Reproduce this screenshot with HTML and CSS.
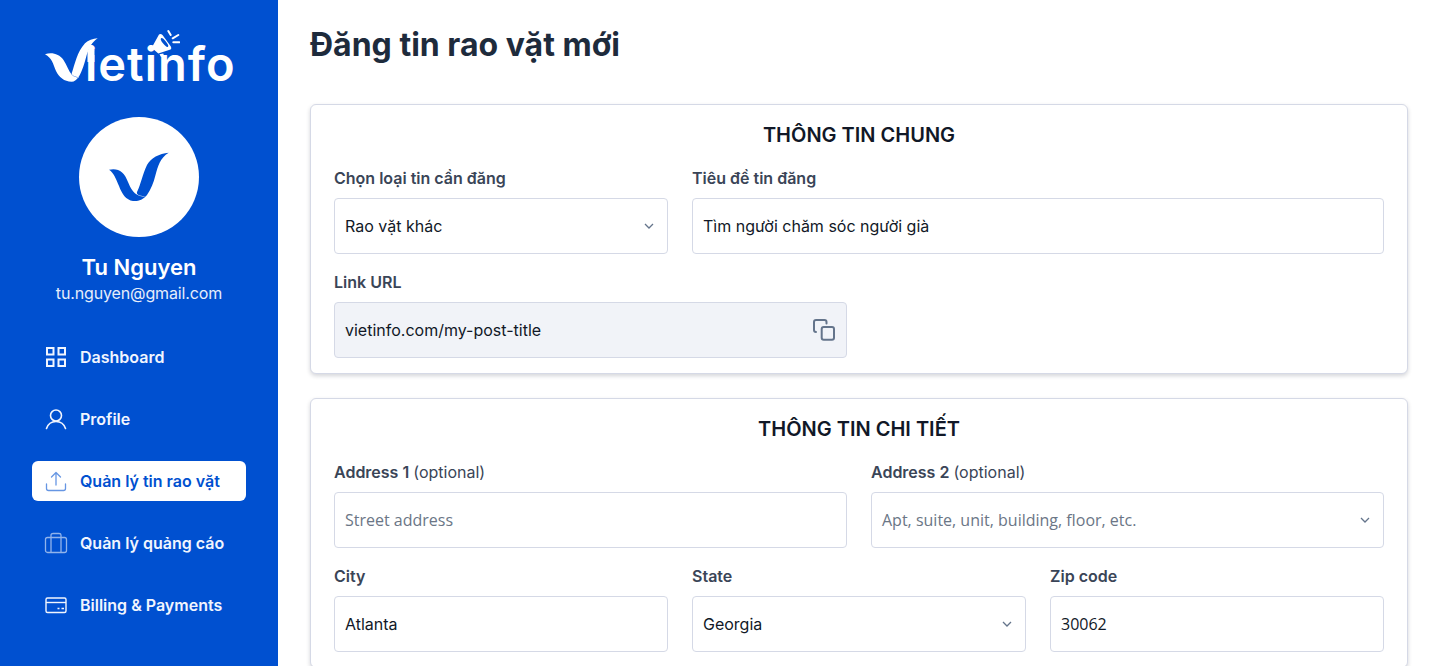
FILE: index.html
```html
<!DOCTYPE html>
<html lang="vi">
<head>
<meta charset="utf-8">
<title>Đăng tin rao vặt mới</title>
<link rel="stylesheet" href="styles.css">
</head>
<body>
<div class="app">
  <aside class="sidebar">
    <div class="logo">
      <span class="logo-text">ietinfo</span>
      <svg class="logo-v" viewBox="0 0 56 48" width="56" height="48" aria-hidden="true"><path fill="#fff" d="M1 18.300C8 16 15 18 19.500 24C23 29 24.500 35 28 39C30 41 33 41.700 35.300 41.700C31 40.500 28 40 27.700 37.300C31 28 33 16 41 7.300C44 4.500 49 2.500 53.700 2.300C48 6 45 12 42.700 19C41 25 40 29 38 34C36 39 33 45.700 27.700 45.700C20 45.700 15 41 12 35C9 28 8 22 1 18.300Z"/><rect fill="#fff" x="43.500" y="14" width="7" height="12"/></svg>
      <svg class="logo-horn" viewBox="0 0 30 30" width="30" height="30" aria-hidden="true"><path fill="#fff" d="M9 6.500C10 5.500 11.500 6 12.500 7L20.500 18C21.500 19.500 21.500 21 20.500 21.500L8.300 25.500L1.700 19.700ZM9.500 26.300L13.300 25.500L14 28L11 29Z"/><ellipse fill="#0050d0" cx="14.500" cy="14.500" rx="5.500" ry="1.700" transform="rotate(51 14.500 14.500)"/><path fill="none" stroke="#fff" stroke-width="2" stroke-linecap="round" d="M18.300 3L20.700 7M22.700 10.300L28.300 7M23.300 14.300H29.300"/></svg>
    </div>
    <div class="avatar">
      <svg viewBox="0 0 60 50" width="60" height="50" aria-hidden="true"><path fill="#0050d0" d="M0 17.700C9 15.500 15.500 20 19 30C21.500 36 25 44 34 44.500L37 44C32 44.500 27 43 28 40C32 32 33.500 22 38 13C42 6 50 1.500 59.700 0.700C51 6 49 14 46.500 23C44.500 31 42 37 38 43C34 48 29 49.500 24 49C17 48 13 42 10 34C7 27 5 21 0 17.700Z"/></svg>
    </div>
    <div class="user-name">Tu Nguyen</div>
    <div class="user-mail">tu.nguyen@gmail.com</div>
    <nav class="nav">
      <a class="nav-item">
        <svg class="ico" viewBox="0 0 24 24" fill="none" stroke="currentColor" stroke-width="2"><rect x="3" y="3" width="6.500" height="6.500"/><rect x="14.500" y="3" width="6.500" height="6.500"/><rect x="3" y="14.500" width="6.500" height="6.500"/><rect x="14.500" y="14.500" width="6.500" height="6.500"/></svg>
        <span>Dashboard</span>
      </a>
      <a class="nav-item">
        <svg class="ico" viewBox="0 0 24 24" fill="none" stroke="currentColor" stroke-width="1.600" stroke-linecap="round"><circle cx="12" cy="8.500" r="5.500"/><path d="M2.500 21.500C4 17 7.500 14.500 12 14.500C16.500 14.500 20 17 21.500 21.500"/></svg>
        <span>Profile</span>
      </a>
      <a class="nav-item nav-active">
        <svg class="ico" viewBox="0 0 24 24" fill="none" stroke="currentColor" stroke-width="1.300" stroke-linecap="round" stroke-linejoin="round"><path class="soft" d="M2.500 15V19.500C2.500 20.800 3.200 21.500 4.500 21.500H19.500C20.800 21.500 21.500 20.800 21.500 19.500V15"/><path class="soft" d="M12 16V3.500M7.500 8L12 3.500L16.500 8"/></svg>
        <span>Quản lý tin rao vặt</span>
      </a>
      <a class="nav-item">
        <svg class="ico" viewBox="0 0 24 24" fill="none" stroke="currentColor" stroke-width="1.300" stroke-linejoin="round"><g class="soft"><rect x="1.500" y="6.500" width="21" height="15" rx="2"/><path d="M7 21.500V4C7 3 8 2.500 9 2.500H15C16 2.500 17 3 17 4V21.500"/></g></svg>
        <span>Quản lý quảng cáo</span>
      </a>
      <a class="nav-item">
        <svg class="ico" viewBox="0 0 24 24" fill="none" stroke="currentColor" stroke-width="1.400"><rect x="2" y="5" width="20" height="14.500" rx="1.500"/><path d="M2 9.500H22"/><path stroke-width="1.600" d="M13.500 15.500H15.500M17.500 15.500H20"/></svg>
        <span>Billing &amp; Payments</span>
      </a>
    </nav>
  </aside>
  <main class="main">
    <h1 class="page-title">Đăng tin rao vặt mới</h1>
    <section class="card">
      <h2 class="card-title">THÔNG TIN CHUNG</h2>
      <div class="row row-3">
        <div class="field">
          <label class="label">Chọn loại tin cần đăng</label>
          <div class="control"><span>Rao vặt khác</span><svg class="chev" viewBox="0 0 12 12"><path d="M2 4L6 8L10 4"/></svg></div>
        </div>
        <div class="field span-2">
          <label class="label">Tiêu đề tin đăng</label>
          <div class="control"><span>Tìm người chăm sóc người già</span></div>
        </div>
      </div>
      <div class="row row-2">
        <div class="field">
          <label class="label">Link URL</label>
          <div class="control control-off"><span>vietinfo.com/my-post-title</span>
            <svg class="copy" viewBox="0 0 24 24" fill="none" stroke="#64748b" stroke-width="2" stroke-linejoin="round"><rect x="10.700" y="9" width="12.300" height="12.700" rx="2"/><path stroke-linecap="round" d="M5 14C3.800 14 3 13 3 12V4C3 2.900 3.900 2 5 2H13.500C14.600 2 15.500 2.900 15.500 4V5.500"/></svg>
          </div>
        </div>
      </div>
    </section>
    <section class="card">
      <h2 class="card-title">THÔNG TIN CHI TIẾT</h2>
      <div class="row row-2">
        <div class="field">
          <label class="label">Address 1 <span class="opt">(optional)</span></label>
          <div class="control"><span class="ph">Street address</span></div>
        </div>
        <div class="field">
          <label class="label">Address 2 <span class="opt">(optional)</span></label>
          <div class="control"><span class="ph">Apt, suite, unit, building, floor, etc.</span><svg class="chev" viewBox="0 0 12 12"><path d="M2 4L6 8L10 4"/></svg></div>
        </div>
      </div>
      <div class="row row-3">
        <div class="field">
          <label class="label">City</label>
          <div class="control"><span>Atlanta</span></div>
        </div>
        <div class="field">
          <label class="label">State</label>
          <div class="control"><span>Georgia</span><svg class="chev" viewBox="0 0 12 12"><path d="M2 4L6 8L10 4"/></svg></div>
        </div>
        <div class="field">
          <label class="label">Zip code</label>
          <div class="control"><span class="num">30062</span></div>
        </div>
      </div>
    </section>
  </main>
</div>
</body>
</html>
```
FILE: styles.css
```css
* { box-sizing: border-box; }
html, body { margin: 0; height: 100%; overflow: hidden; }
body { font-family: Inter, "Liberation Sans", sans-serif; color: #111827; background: #fff; }

.app { display: flex; height: 666px; overflow: hidden; }

.sidebar {
  width: 278px;
  flex: none;
  background: #0050d0;
  color: #fff;
  display: flex;
  flex-direction: column;
  align-items: center;
}

.logo { position: relative; width: 190px; height: 58px; margin-top: 28px; }
.logo-text { display: block; font-weight: 600; font-size: 47px; line-height: 46px; letter-spacing: 1px; margin: 13px 0 0 41px; color: #fff; white-space: nowrap; }
.logo-v { position: absolute; left: 0; top: 8px; }
.logo-horn { position: absolute; left: 106px; top: 0; }

.avatar { width: 120px; height: 120px; border-radius: 50%; background: #fff; margin-top: 31px; display: flex; align-items: center; justify-content: center; }
.user-name { font-size: 22px; line-height: 28px; font-weight: 600; margin-top: 16px; }
.user-mail { font-size: 16px; line-height: 24px; letter-spacing: -0.13px; margin-top: 0; color: #e6edfb; }

.nav { align-self: stretch; display: flex; flex-direction: column; gap: 22px; padding: 0 32px; margin-top: 32px; }
.nav-item { height: 40px; display: flex; align-items: center; gap: 12px; padding: 0 12px; border-radius: 6px; font-size: 16px; font-weight: 600; color: #f1f5fe; }
.nav-active { background: #fff; color: #0050d0; }
.ico { width: 24px; height: 24px; flex: none; }
.soft { opacity: 0.6; }

.main { flex: 1; padding: 0 32px; min-width: 0; }
.page-title { font-size: 32px; line-height: 40px; font-weight: 700; color: #1e2b3c; margin: 25px 0 39px; }

.card { border: 1px solid #d5d9e6; border-radius: 6px; background: #fff; padding: 15px 23px 15px; margin-bottom: 24px; box-shadow: 0 2px 4px rgba(15, 23, 42, 0.18); }
.card-title { font-size: 20px; line-height: 30px; font-weight: 600; text-align: center; margin: 0 0 16px; color: #111827; }

.row { display: grid; gap: 24px; margin-bottom: 16px; }
.row:last-child { margin-bottom: 0; }
.row-3 { grid-template-columns: repeat(3, 1fr); }
.row-2 { grid-template-columns: repeat(2, 1fr); }
.span-2 { grid-column: span 2; }

.label { display: block; font-size: 16px; line-height: 24px; font-weight: 600; color: #3a4557; margin-bottom: 8px; }
.opt { font-weight: 400; }

.control { height: 56px; border: 1px solid #d5d9e6; border-radius: 4px; background: #fff; display: flex; align-items: center; justify-content: space-between; padding: 0 10px; font-size: 16px; color: #111827; }
.control-off { background: #f1f3f8; }
.ph { font-family: "Open Sans", sans-serif; color: #6b7686; }
.num { font-family: "Open Sans", sans-serif; }
.chev { width: 12px; height: 12px; fill: none; stroke: #64748b; stroke-width: 1.300; margin-right: 2px; }
.copy { width: 24px; height: 24px; flex: none; margin-right: 1px; }
```
